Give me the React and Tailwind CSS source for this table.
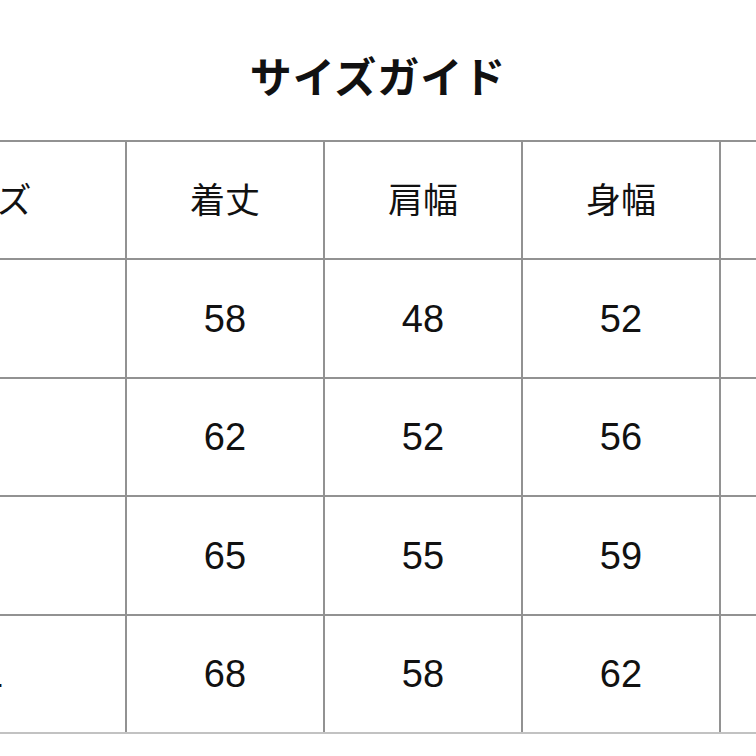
const headers = ["サイズ", "着丈", "肩幅", "身幅", "袖丈"];

const rows = [
  ["S", "58", "48", "52", "20"],
  ["M", "62", "52", "56", "21"],
  ["L", "65", "55", "59", "22"],
  ["XL", "68", "58", "62", "23"],
];

const jp = { fontFamily: '"Noto Sans CJK JP", "Noto Sans", sans-serif' };
const num = { fontFamily: '"Liberation Sans", Arial, "Noto Sans CJK JP", sans-serif' };

export default function App() {
  return (
    <div className="w-[756px] h-[756px] overflow-hidden bg-white text-[#111]">
      {/* Title */}
      <div className="h-[140px] flex items-center justify-center pt-[10px]">
        <h1 className="text-[42px] font-bold leading-none tracking-[1px]" style={jp}>
          サイズガイド
        </h1>
      </div>

      {/* Table */}
      <div className="ml-[-166px] w-[1086px] grid grid-cols-[291px_196px_196px_196px_196px] grid-rows-[116px_117px_116px_117px_116px] gap-[2px] bg-[#929292] pt-[2px] border-b-2 border-[#c2c2c2]">
        {headers.map((h) => (
          <div key={h} className="bg-white flex items-center justify-center text-[35px] leading-none pb-[5px]" style={jp}>
            {h}
          </div>
        ))}
        {rows.map((r) =>
          r.map((c, i) => (
            <div key={r[0] + i} className="bg-white flex items-center justify-center text-[38px] leading-none" style={num}>
              {c}
            </div>
          ))
        )}
      </div>
    </div>
  );
}
